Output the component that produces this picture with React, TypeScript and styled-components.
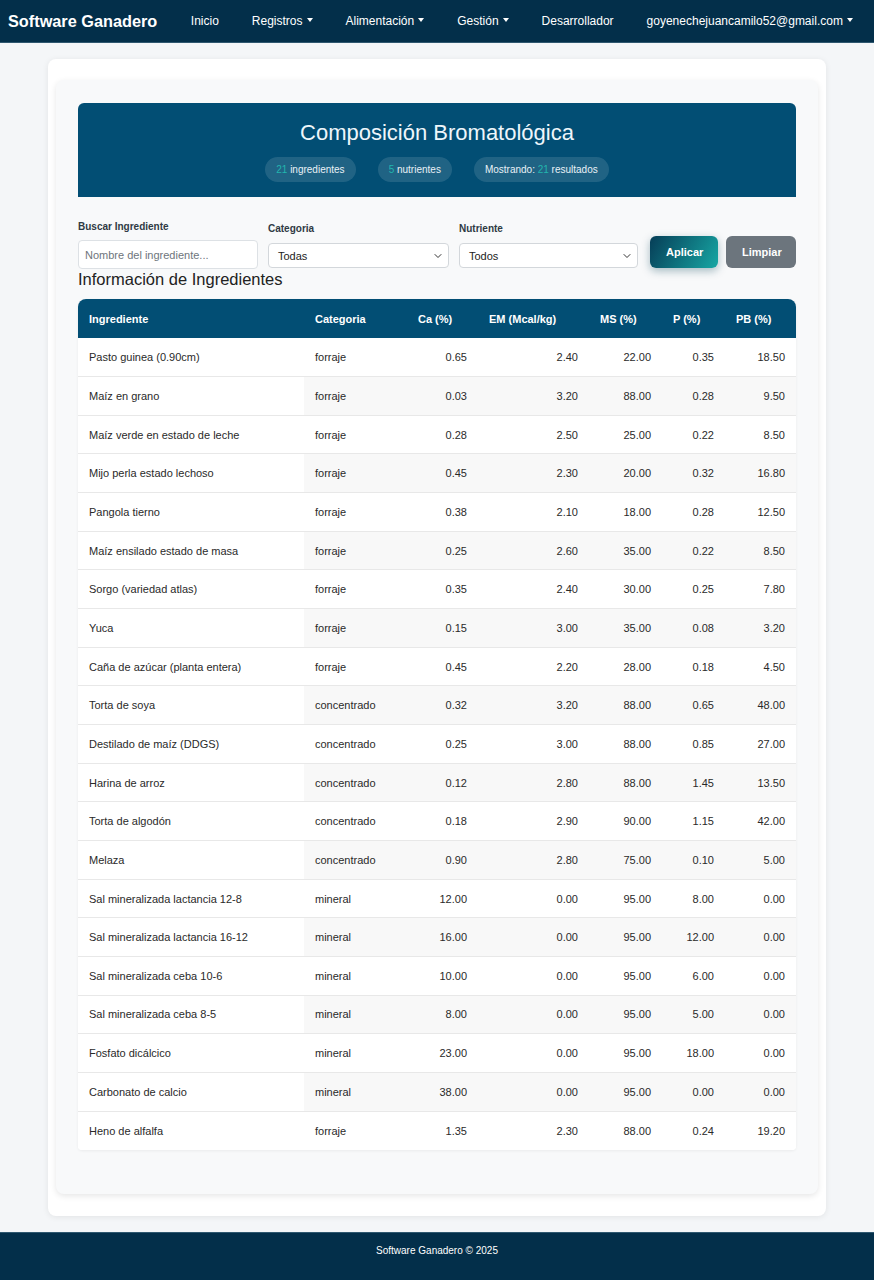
import React, { useState } from "react";
import styled, { createGlobalStyle } from "styled-components";

const GlobalStyle = createGlobalStyle`
  html, body {
    margin: 0;
    padding: 0;
    background: #f4f6f8;
    font-family: "Liberation Sans", Arial, sans-serif;
  }
  * { box-sizing: border-box; }
`;

const Navbar = styled.nav`
  height: 43px;
  background: #032f4a;
  border-bottom: 1px solid #2f5870;
  display: flex;
  align-items: center;
  padding: 0 8px;
  color: #fff;
`;

const Brand = styled.div`
  font-size: 16.3px;
  font-weight: 700;
  margin-right: 17px;
  white-space: nowrap;
  flex-shrink: 0;
`;

const NavItem = styled.div`
  font-size: 12px;
  color: #fff;
  padding: 0 16.5px;
  display: flex;
  align-items: center;
  white-space: nowrap;
  flex-shrink: 0;
`;

const Caret = styled.span`
  display: inline-block;
  margin-left: 4px;
  width: 0;
  height: 0;
  border-left: 3.5px solid transparent;
  border-right: 3.5px solid transparent;
  border-top: 4px solid #fff;
  transform: translateY(-1px);
`;

const Page = styled.main`
  padding: 16px 48px 16px 48px;
`;

const OuterCard = styled.div`
  background: #fff;
  border-radius: 8px;
  box-shadow: 0 1px 6px rgba(0, 0, 0, 0.08);
  padding: 21px 8px 22px 8px;
`;

const InnerCard = styled.div`
  background: #f8f9fa;
  border-radius: 8px;
  box-shadow: 0 2px 6px rgba(0, 0, 0, 0.1);
  padding: 23px 22px 44px 22px;
`;

const Banner = styled.header`
  background: #024e74;
  border-radius: 6px 6px 0 0;
  padding: 17px 0 15px 0;
  text-align: center;
  color: #eef6fb;
`;

const Title = styled.h1`
  margin: 0 0 11px 0;
  font-size: 22px;
  font-weight: 400;
  line-height: 26px;
`;

const Pills = styled.div`
  display: flex;
  justify-content: center;
  gap: 22px;
`;

const Pill = styled.span`
  background: rgba(255, 255, 255, 0.12);
  border-radius: 13px;
  height: 25px;
  line-height: 25px;
  padding: 0 11px;
  font-size: 10px;
  color: #e9f1f6;
`;

const Num = styled.span`
  color: #22b5ae;
`;

const Filters = styled.div`
  display: flex;
  align-items: flex-end;
  gap: 10px;
  margin-top: 24px;
`;

const Field = styled.div<{ $w: number; $lift?: number }>`
  width: ${(p) => p.$w}px;
  display: flex;
  flex-direction: column;
  margin-bottom: ${(p) => p.$lift ?? 0}px;
`;

const Label = styled.label<{ $gap?: number }>`
  font-size: 10px;
  font-weight: 700;
  color: #2f3a44;
  margin-bottom: ${(p) => p.$gap ?? 9}px;
`;

const TextInput = styled.input`
  height: 29px;
  border: 1px solid #dde1e5;
  border-radius: 4px;
  padding: 0 6px;
  font-size: 11px;
  font-family: "Liberation Sans", Arial, sans-serif;
  background: #fff;
  &::placeholder { color: #6e757c; }
`;

const SelectBox = styled.div`
  height: 25px;
  border: 1px solid #d3d7db;
  border-radius: 4px;
  background: #fff;
  display: flex;
  align-items: center;
  justify-content: space-between;
  padding: 0 6px 0 9px;
  font-size: 11px;
  color: #222;
`;

const Button = styled.button<{ $primary?: boolean }>`
  height: 32px;
  border: none;
  border-radius: 6px;
  padding: 0 16px;
  margin-bottom: 1px;
  font-size: 11px;
  font-weight: 700;
  color: #fff;
  font-family: "Liberation Sans", Arial, sans-serif;
  background: ${(p) => (p.$primary ? "linear-gradient(120deg, #063d57 0%, #17a7a4 100%)" : "#6c757d")};
  box-shadow: ${(p) => (p.$primary ? "0 3px 8px rgba(8, 70, 90, 0.35)" : "none")};
  margin-left: ${(p) => (p.$primary ? "2px" : "-2px")};
  width: ${(p) => (p.$primary ? "68px" : "70px")};
`;

const SectionTitle = styled.h2`
  margin: 0;
  font-size: 16.5px;
  font-weight: 400;
  color: #222;
  line-height: 20px;
`;

const TableWrap = styled.div`
  margin-top: 10px;
  border-radius: 8px 8px 4px 4px;
  overflow: hidden;
  box-shadow: 0 1px 3px rgba(0, 0, 0, 0.06);
  background: #fff;
`;

const Table = styled.table`
  width: 100%;
  border-collapse: collapse;
  table-layout: fixed;
  font-size: 11px;
`;

const Th = styled.th`
  background: #024e74;
  color: #fff;
  font-weight: 700;
  text-align: left;
  height: 39px;
  padding: 0 11px;
`;

const Row = styled.tr`
  height: 38.67px;
  border-bottom: 1px solid #e8e8e8;
  &:last-child { border-bottom: none; }
`;

const Td = styled.td<{ $num?: boolean; $shade?: boolean }>`
  padding: 0 11px;
  color: #2a2a2a;
  text-align: ${(p) => (p.$num ? "right" : "left")};
  background: ${(p) => (p.$shade ? "#f8f8f8" : "#fff")};
  white-space: nowrap;
`;

const Footer = styled.footer`
  background: #032f4a;
  border-top: 1px solid #2f5870;
  height: 48px;
  padding-top: 12px;
  text-align: center;
  color: #fff;
  font-size: 10px;
`;

const Chevron = () => (
  <svg width="8" height="8" viewBox="0 0 16 16">
    <path d="M2 5l6 6 6-6" fill="none" stroke="#333" strokeWidth="2" strokeLinecap="round" strokeLinejoin="round" />
  </svg>
);

type Item = [string, string, number, number, number, number, number];

const items: Item[] = [
  ["Pasto guinea (0.90cm)", "forraje", 0.65, 2.4, 22, 0.35, 18.5],
  ["Maíz en grano", "forraje", 0.03, 3.2, 88, 0.28, 9.5],
  ["Maíz verde en estado de leche", "forraje", 0.28, 2.5, 25, 0.22, 8.5],
  ["Mijo perla estado lechoso", "forraje", 0.45, 2.3, 20, 0.32, 16.8],
  ["Pangola tierno", "forraje", 0.38, 2.1, 18, 0.28, 12.5],
  ["Maíz ensilado estado de masa", "forraje", 0.25, 2.6, 35, 0.22, 8.5],
  ["Sorgo (variedad atlas)", "forraje", 0.35, 2.4, 30, 0.25, 7.8],
  ["Yuca", "forraje", 0.15, 3.0, 35, 0.08, 3.2],
  ["Caña de azúcar (planta entera)", "forraje", 0.45, 2.2, 28, 0.18, 4.5],
  ["Torta de soya", "concentrado", 0.32, 3.2, 88, 0.65, 48],
  ["Destilado de maíz (DDGS)", "concentrado", 0.25, 3.0, 88, 0.85, 27],
  ["Harina de arroz", "concentrado", 0.12, 2.8, 88, 1.45, 13.5],
  ["Torta de algodón", "concentrado", 0.18, 2.9, 90, 1.15, 42],
  ["Melaza", "concentrado", 0.9, 2.8, 75, 0.1, 5],
  ["Sal mineralizada lactancia 12-8", "mineral", 12, 0, 95, 8, 0],
  ["Sal mineralizada lactancia 16-12", "mineral", 16, 0, 95, 12, 0],
  ["Sal mineralizada ceba 10-6", "mineral", 10, 0, 95, 6, 0],
  ["Sal mineralizada ceba 8-5", "mineral", 8, 0, 95, 5, 0],
  ["Fosfato dicálcico", "mineral", 23, 0, 95, 18, 0],
  ["Carbonato de calcio", "mineral", 38, 0, 95, 0, 0],
  ["Heno de alfalfa", "forraje", 1.35, 2.3, 88, 0.24, 19.2],
];

const columns = ["Ingrediente", "Categoria", "Ca (%)", "EM (Mcal/kg)", "MS (%)", "P (%)", "PB (%)"];
const widths = [226, 103, 71, 111, 73, 63, 71];

export default function App() {
  const [search, setSearch] = useState("");

  return (
    <>
      <GlobalStyle />
      <Navbar>
        <Brand>Software Ganadero</Brand>
        <NavItem>Inicio</NavItem>
        <NavItem>Registros<Caret /></NavItem>
        <NavItem>Alimentación<Caret /></NavItem>
        <NavItem>Gestión<Caret /></NavItem>
        <NavItem>Desarrollador</NavItem>
        <NavItem>goyenechejuancamilo52@gmail.com<Caret /></NavItem>
      </Navbar>

      <Page>
        <OuterCard>
          <InnerCard>
            <Banner>
              <Title>Composición Bromatológica</Title>
              <Pills>
                <Pill><Num>21</Num> ingredientes</Pill>
                <Pill><Num>5</Num> nutrientes</Pill>
                <Pill>Mostrando: <Num>21</Num> resultados</Pill>
              </Pills>
            </Banner>

            <Filters>
              <Field $w={180}>
                <Label $gap={8}>Buscar Ingrediente</Label>
                <TextInput
                  placeholder="Nombre del ingrediente..."
                  value={search}
                  onChange={(e) => setSearch(e.target.value)}
                />
              </Field>
              <Field $w={181} $lift={1}>
                <Label>Categoria</Label>
                <SelectBox>Todas<Chevron /></SelectBox>
              </Field>
              <Field $w={179} $lift={1}>
                <Label>Nutriente</Label>
                <SelectBox>Todos<Chevron /></SelectBox>
              </Field>
              <Button $primary>Aplicar</Button>
              <Button>Limpiar</Button>
            </Filters>

            <SectionTitle>Información de Ingredientes</SectionTitle>

            <TableWrap>
              <Table>
                <colgroup>
                  {widths.map((w, i) => (
                    <col key={i} style={{ width: w }} />
                  ))}
                </colgroup>
                <thead>
                  <tr>
                    {columns.map((c) => (
                      <Th key={c}>{c}</Th>
                    ))}
                  </tr>
                </thead>
                <tbody>
                  {items.map((it, i) => {
                    const shade = i % 2 === 1;
                    return (
                      <Row key={it[0]}>
                        <Td>{it[0]}</Td>
                        <Td $shade={shade}>{it[1]}</Td>
                        {it.slice(2).map((v, j) => (
                          <Td key={j} $num $shade={shade}>
                            {(v as number).toFixed(2)}
                          </Td>
                        ))}
                      </Row>
                    );
                  })}
                </tbody>
              </Table>
            </TableWrap>
          </InnerCard>
        </OuterCard>
      </Page>

      <Footer>Software Ganadero © 2025</Footer>
    </>
  );
}
